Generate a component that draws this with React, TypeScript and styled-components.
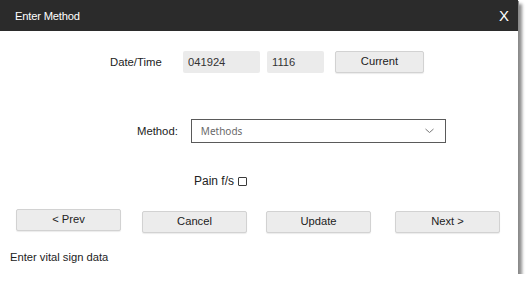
import React, { useState } from 'react';
import styled, { createGlobalStyle } from 'styled-components';

const GlobalStyle = createGlobalStyle`
  html, body {
    margin: 0;
    padding: 0;
    background: #ffffff;
  }
  body {
    font-family: "Liberation Sans", Arial, sans-serif;
    color: #222;
  }
`;

const Dialog = styled.div`
  width: 518px;
  height: 274px;
  background: #ffffff;
  display: flex;
  flex-direction: column;
  box-shadow: 1px 1px 0 #8a8a8a, 4px 4px 3px rgba(0, 0, 0, 0.45);
`;

const Header = styled.div`
  height: 31px;
  flex-shrink: 0;
  background: #2b2b2b;
  color: #ffffff;
  display: flex;
  align-items: center;
  justify-content: space-between;
  padding: 0 9px 0 15px;
`;

const Title = styled.span`
  font-size: 11.2px;
  letter-spacing: -0.2px;
`;

const CloseButton = styled.button`
  background: none;
  border: none;
  color: #ffffff;
  font-family: "Liberation Sans", Arial, sans-serif;
  font-size: 15px;
  padding: 0;
  cursor: pointer;
`;

const Row = styled.div<{ $top: number; $left?: number }>`
  display: flex;
  align-items: center;
  margin-top: ${(p) => p.$top}px;
  padding-left: ${(p) => p.$left ?? 0}px;
`;

const Label = styled.span<{ $width?: number; $size?: number }>`
  font-size: ${(p) => p.$size ?? 11.3}px;
  width: ${(p) => (p.$width ? `${p.$width}px` : 'auto')};
  flex-shrink: 0;
  color: #222;
`;

const Field = styled.input<{ $width: number; $gap?: number }>`
  width: ${(p) => p.$width}px;
  height: 22px;
  box-sizing: border-box;
  margin: 0 0 0 ${(p) => p.$gap ?? 0}px;
  border: none;
  border-radius: 2px;
  background: #ebebeb;
  padding: 0 5px;
  font-family: "Liberation Sans", Arial, sans-serif;
  font-size: 11.2px;
  color: #333;
  outline: none;
`;

const Button = styled.button<{ $width?: number; $gap?: number; $lift?: number }>`
  width: ${(p) => p.$width ?? 105}px;
  height: 22px;
  box-sizing: border-box;
  margin: 0 0 0 ${(p) => p.$gap ?? 0}px;
  background: #ececec;
  border: 1px solid #d2d2d2;
  border-radius: 2px;
  box-shadow: 0 1px 1px rgba(0, 0, 0, 0.08);
  font-family: "Liberation Sans", Arial, sans-serif;
  font-size: 11.2px;
  color: #222;
  padding: 0 0 2px;
  cursor: pointer;
  position: relative;
  top: ${(p) => -(p.$lift ?? 0)}px;
`;

const SelectBox = styled.div`
  width: 255px;
  height: 24px;
  box-sizing: border-box;
  border: 1px solid #5a5a5a;
  display: flex;
  align-items: center;
  justify-content: space-between;
  padding: 0 11px 0 9px;
  margin-left: 13px;
`;

const SelectText = styled.span`
  font-family: "Noto Sans", "Open Sans", sans-serif;
  font-size: 10px;
  color: #6a6a6a;
`;

const Check = styled.input`
  appearance: none;
  width: 9px;
  height: 9px;
  margin: 0 0 0 4px;
  border: 1px solid #3a3a3a;
  border-radius: 1px;
  box-sizing: border-box;
  background: #fff;
  &:checked {
    background: #3a3a3a;
  }
`;

const ButtonBar = styled.div`
  display: flex;
  align-items: center;
  padding-left: 16px;
  margin-top: 23px;
`;

const StatusText = styled.div`
  font-size: 11.2px;
  color: #222;
  padding-left: 10px;
  margin-top: 17px;
  line-height: 14px;
`;

export default function App() {
  const [date, setDate] = useState('041924');
  const [time, setTime] = useState('1116');
  const [pain, setPain] = useState(false);

  return (
    <>
      <GlobalStyle />
      <Dialog>
        <Header>
          <Title>Enter Method</Title>
          <CloseButton>X</CloseButton>
        </Header>

        <Row $top={20} $left={110}>
          <Label $width={73}>Date/Time</Label>
          <Field $width={77} value={date} onChange={(e) => setDate(e.target.value)} />
          <Field $width={57} $gap={7} value={time} onChange={(e) => setTime(e.target.value)} />
          <Button $width={89} $gap={11}>Current</Button>
        </Row>

        <Row $top={46} $left={137}>
          <Label>Method:</Label>
          <SelectBox>
            <SelectText>Methods</SelectText>
            <svg width="9" height="6" viewBox="0 0 9 6">
              <path d="M0.5 1 L4.5 4.5 L8.5 1" fill="none" stroke="#777" strokeWidth="1" />
            </svg>
          </SelectBox>
        </Row>

        <Row $top={31} $left={194} style={{ height: 14 }}>
          <Label $size={12}>Pain f/s</Label>
          <Check type="checkbox" checked={pain} onChange={() => setPain(!pain)} />
        </Row>

        <ButtonBar>
          <Button $lift={2}>&lt; Prev</Button>
          <Button $gap={21}>Cancel</Button>
          <Button $gap={19}>Update</Button>
          <Button $gap={24}>Next &gt;</Button>
        </ButtonBar>

        <StatusText>Enter vital sign data</StatusText>
      </Dialog>
    </>
  );
}
